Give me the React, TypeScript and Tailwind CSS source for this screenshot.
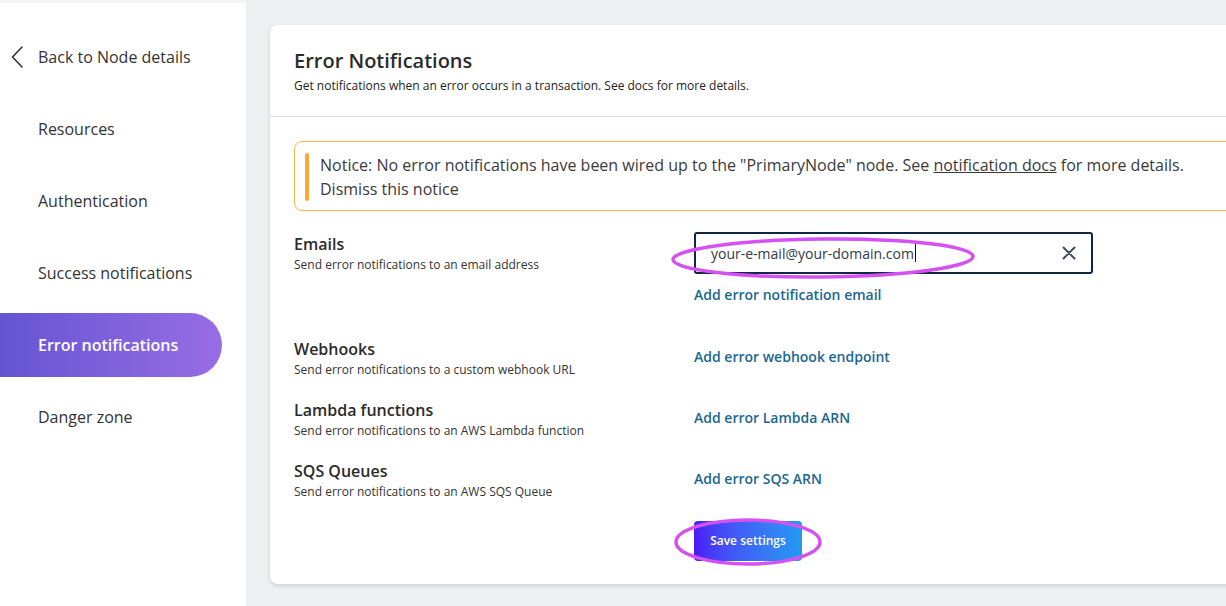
import React from "react";

const navItems = ["Resources", "Authentication", "Success notifications", "Error notifications", "Danger zone"];

function Row({ title, desc, link }: { title: string; desc: string; link: string }) {
  return (
    <div className="flex items-center">
      <div className="w-[400px] shrink-0">
        <div className="text-[16px] leading-[20px] font-semibold text-[#2b2b2b]">{title}</div>
        <div className="text-[12px] leading-[20px] mt-[1px] text-[#333]">{desc}</div>
      </div>
      <div className="text-[14px] leading-[20px] font-semibold text-[#1a6790] -mt-[6px]">{link}</div>
    </div>
  );
}

export default function App() {
  return (
    <div
      className="flex h-[606px] w-[1226px] overflow-hidden bg-[#eeeff1]"
      style={{ fontFamily: '"Open Sans", "Noto Sans", sans-serif' }}
    >
      {/* Sidebar */}
      <aside className="w-[246px] shrink-0 bg-white border-t-[3px] border-[#f3f4f6]">
        <div className="pt-[22px] flex flex-col gap-[8px]">
          <div className="h-[64px] flex items-center text-[16px] text-[#333]">
            <svg width="12" height="22" viewBox="0 0 12 22" className="ml-[11px] mr-[15px]" fill="none">
              <path d="M11 1 L1.5 11 L11 21" stroke="#333" strokeWidth="1.6" strokeLinecap="round" strokeLinejoin="round" />
            </svg>
            Back to Node details
          </div>
          {navItems.map((n) => {
            const active = n === "Error notifications";
            return (
              <div
                key={n}
                className={
                  active
                    ? "h-[64px] w-[222px] flex items-center pl-[38px] rounded-r-full bg-gradient-to-r from-[#6554d3] to-[#986de4] text-white text-[16px] font-semibold"
                    : "h-[64px] flex items-center pl-[38px] text-[16px] text-[#333]"
                }
              >
                {n}
              </div>
            );
          })}
        </div>
      </aside>

      {/* Main */}
      <main className="flex-1 pl-[24px] pt-[25px]">
        <div className="w-[1000px] bg-white rounded-[8px] shadow-[0_2px_4px_rgba(0,0,0,0.12)] pb-[23px]">
          <div className="px-[24px] pt-[22px] pb-[22px] border-b border-[#dcdcdf]">
            <h1 className="text-[20px] leading-[28px] font-semibold text-[#2b2b2b]">Error Notifications</h1>
            <p className="text-[12px] leading-[16px] text-[#222] mt-[3px]">
              Get notifications when an error occurs in a transaction. See docs for more details.
            </p>
          </div>

          <div className="px-[24px] pt-[24px]">
            {/* Notice */}
            <div className="w-[960px] border border-[#fbb34d] rounded-[8px] pt-[11px] pb-[9px] pl-[10px] flex gap-[11px]">
              <div className="w-[4px] rounded-full bg-[#f9a838] self-stretch" />
              <div className="text-[16px] leading-[24px] text-[#3a3a3a]">
                Notice: No error notifications have been wired up to the "PrimaryNode" node. See{" "}
                <span className="underline">notification docs</span> for more details.
                <br />
                Dismiss this notice
              </div>
            </div>

            {/* Emails */}
            <div className="flex mt-[21px]">
              <div className="w-[400px] shrink-0 pt-[2px]">
                <div className="text-[16px] leading-[20px] font-semibold text-[#2b2b2b]">Emails</div>
                <div className="text-[12px] leading-[20px] mt-[1px] text-[#333]">Send error notifications to an email address</div>
              </div>
              <div>
                <div className="relative w-[399px] h-[42px] border-2 border-[#0f2740] rounded-[3px] flex items-center pl-[15px] pr-[15px]">
                  <span className="text-[14px] text-[#2f3a48]">your-e-mail@your-domain.com</span>
                  <span className="inline-block w-[1px] h-[18px] bg-[#111] ml-[1px]" />
                  <svg width="14" height="14" viewBox="0 0 14 14" className="ml-auto" fill="none">
                    <path d="M1.5 1.5 L12.5 12.5 M12.5 1.5 L1.5 12.5" stroke="#3d4d63" strokeWidth="2" strokeLinecap="round" />
                  </svg>
                  <svg
                    className="absolute left-[-26px] top-[2px] pointer-events-none"
                    width="306"
                    height="44"
                    viewBox="0 0 306 44"
                    fill="none"
                  >
                    <ellipse cx="153" cy="22" rx="150" ry="19" stroke="#d551f2" strokeWidth="3.5" transform="rotate(-0.6 153 22)" />
                  </svg>
                </div>
                <div className="mt-[11px] text-[14px] leading-[20px] font-semibold text-[#1a6790]">
                  Add error notification email
                </div>
              </div>
            </div>

            <div className="mt-[34px] flex flex-col gap-[20px]">
              <Row title="Webhooks" desc="Send error notifications to a custom webhook URL" link="Add error webhook endpoint" />
              <Row title="Lambda functions" desc="Send error notifications to an AWS Lambda function" link="Add error Lambda ARN" />
              <Row title="SQS Queues" desc="Send error notifications to an AWS SQS Queue" link="Add error SQS ARN" />
            </div>

            <div className="mt-[19px] pl-[400px]">
              <div className="relative w-[108px] h-[40px] rounded-[4px] bg-gradient-to-r from-[#4a17f6] to-[#2299f2] flex items-center justify-center text-white text-[12px] font-semibold">
                Save settings
                <svg
                  className="absolute left-[-20px] top-[-3px] pointer-events-none"
                  width="150"
                  height="50"
                  viewBox="0 0 150 50"
                  fill="none"
                >
                  <ellipse cx="74" cy="24" rx="72" ry="22" stroke="#d551f2" strokeWidth="3.5" />
                </svg>
              </div>
            </div>
          </div>
        </div>
      </main>
    </div>
  );
}
